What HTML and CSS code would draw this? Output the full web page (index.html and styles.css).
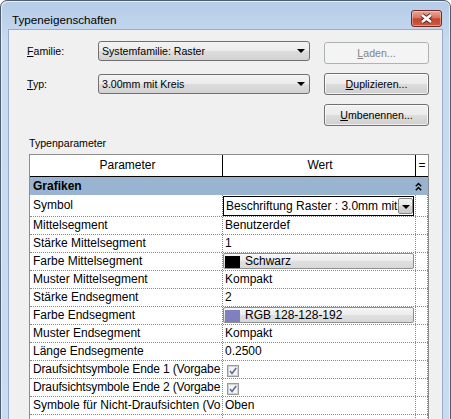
FILE: index.html
```html
<!DOCTYPE html>
<html>
  <head>
    <meta charset="utf-8" />
    <title>Typeneigenschaften</title>
    <link rel="stylesheet" href="styles.css">
  </head>
  <body>
    <div class="window">
      <div class="titlebar">
        <span class="title">Typeneigenschaften</span>
        <button class="close">
          <svg width="15" height="11" viewBox="0 0 15 11">
            <path d="M3 2 L12 9 M12 2 L3 9" stroke="#5b2a24" stroke-width="4.6" fill="none" />
            <path d="M3 2 L12 9 M12 2 L3 9" stroke="#fff" stroke-width="2.6" fill="none" />
          </svg>
        </button>
      </div>
      <div class="client">
        <div class="form-row r1">
          <span class="lbl"><u>F</u>amilie:</span>
          <div class="combo">Systemfamilie: Raster<span class="arrow"></span></div>
          <button class="btn disabled"><u>L</u>aden...</button>
        </div>
        <div class="form-row r2">
          <span class="lbl"><u>T</u>yp:</span>
          <div class="combo">3.00mm mit Kreis<span class="arrow"></span></div>
          <button class="btn"><u>D</u>uplizieren...</button>
        </div>
        <div class="form-row r3">
          <button class="btn"><u>U</u>mbenennen...</button>
        </div>
        <div class="section-label">Typenparameter</div>
        <div class="props">
          <div class="prow head">
            <div class="c1">Parameter</div>
            <div class="c2">Wert</div>
            <div class="c3">=</div>
          </div>
          <div class="group">
            <span>Grafiken</span>
            <svg width="7" height="9" viewBox="0 0 7 9">
              <path d="M0.8 4.2 L3.5 1.5 L6.2 4.2 M0.8 8.2 L3.5 5.5 L6.2 8.2" stroke="#000" stroke-width="1.5" fill="none" />
            </svg>
          </div>
          <div class="prow tall">
            <div class="c1">Symbol</div>
            <div class="c2 edit">
              <div class="edit-combo">
                <span class="edit-text">Beschriftung Raster : 3.0mm mit</span>
                <span class="dd"><span class="dd-arrow"></span></span>
              </div>
            </div>
            <div class="c3"></div>
          </div>
          <div class="prow">
            <div class="c1">Mittelsegment</div>
            <div class="c2">Benutzerdef</div>
            <div class="c3"></div>
          </div>
          <div class="prow">
            <div class="c1">Stärke Mittelsegment</div>
            <div class="c2">1</div>
            <div class="c3"></div>
          </div>
          <div class="prow">
            <div class="c1">Farbe Mittelsegment</div>
            <div class="c2 edit">
              <div class="color-btn"><span class="swatch black"></span>Schwarz</div>
            </div>
            <div class="c3"></div>
          </div>
          <div class="prow">
            <div class="c1">Muster Mittelsegment</div>
            <div class="c2">Kompakt</div>
            <div class="c3"></div>
          </div>
          <div class="prow">
            <div class="c1">Stärke Endsegment</div>
            <div class="c2">2</div>
            <div class="c3"></div>
          </div>
          <div class="prow">
            <div class="c1">Farbe Endsegment</div>
            <div class="c2 edit">
              <div class="color-btn"><span class="swatch blue"></span>RGB 128-128-192</div>
            </div>
            <div class="c3"></div>
          </div>
          <div class="prow">
            <div class="c1">Muster Endsegment</div>
            <div class="c2">Kompakt</div>
            <div class="c3"></div>
          </div>
          <div class="prow">
            <div class="c1">Länge Endsegmente</div>
            <div class="c2">0.2500</div>
            <div class="c3"></div>
          </div>
          <div class="prow">
            <div class="c1 tight">Draufsichtsymbole Ende 1 (Vorgabe</div>
            <div class="c2">
              <svg class="check" width="12" height="12" viewBox="0 0 12 12">
                <rect x="0.5" y="0.5" width="11" height="11" fill="#e6e6e6" stroke="#9a9a9a" />
                <rect x="1.5" y="1.5" width="9" height="9" fill="#f4f4f4" stroke="#d2d2d2" />
                <path d="M3 6 L5 8.4 L9.2 3" stroke="#5a6f9c" stroke-width="1.6" fill="none" />
              </svg>
            </div>
            <div class="c3"></div>
          </div>
          <div class="prow">
            <div class="c1 tight">Draufsichtsymbole Ende 2 (Vorgabe</div>
            <div class="c2">
              <svg class="check" width="12" height="12" viewBox="0 0 12 12">
                <rect x="0.5" y="0.5" width="11" height="11" fill="#e6e6e6" stroke="#9a9a9a" />
                <rect x="1.5" y="1.5" width="9" height="9" fill="#f4f4f4" stroke="#d2d2d2" />
                <path d="M3 6 L5 8.4 L9.2 3" stroke="#5a6f9c" stroke-width="1.6" fill="none" />
              </svg>
            </div>
            <div class="c3"></div>
          </div>
          <div class="prow">
            <div class="c1">Symbole für Nicht-Draufsichten (Vo</div>
            <div class="c2">Oben</div>
            <div class="c3"></div>
          </div>
          <div class="prow">
            <div class="c1"></div>
            <div class="c2"></div>
            <div class="c3"></div>
          </div>
        </div>
      </div>
    </div>
  </body>
</html>
```

FILE: styles.css
```css
html,
body {
  margin: 0;
  height: 419px;
  overflow: hidden;
  background: #fff;
}

body {
  font-family: "Liberation Sans", Arial, sans-serif;
  color: #000;
}

.window {
  width: 449px;
  height: 470px;
  border: 1px solid #4e5d70;
  border-radius: 7px 7px 0 0;
  background: linear-gradient(#b5cce7, #c7daf0 40px, #c9dcf1);
  box-shadow: inset 1px 1px 0 #e4eef9, inset -1px 0 0 #e4eef9;
  display: flex;
  flex-direction: column;
}

.titlebar {
  height: 28px;
  display: flex;
  align-items: flex-start;
  padding: 0 8px 0 11px;
}

.title {
  margin-top: 11px;
  font-size: 11.7px;
  line-height: 16px;
}

.close {
  margin-left: auto;
  margin-top: 9px;
  width: 31px;
  height: 17px;
  padding: 0;
  border: 1px solid #6f2b22;
  border-radius: 3px;
  background: linear-gradient(#e9a899, #d77562 45%, #c4442f 52%, #cf5a41);
  box-shadow: inset 0 0 0 1px rgba(255, 220, 210, 0.45);
  display: flex;
  align-items: center;
  justify-content: center;
}

.client {
  margin: 0 7px;
  flex: 1;
  background: #f0f0f0;
  border: 1px solid #98acc5;
  border-bottom: none;
}

.form-row {
  display: flex;
  align-items: flex-start;
  padding-left: 18px;
  font-size: 10.6px;
}

.form-row.r1 {
  margin-top: 11px;
}

.form-row.r2 {
  margin-top: 9px;
}

.form-row.r3 {
  margin-top: 9px;
  padding-left: 315px;
}

.lbl {
  width: 71px;
  line-height: 20px;
}

.r2 .lbl {
  margin-top: 1px;
}

.combo {
  width: 212px;
  height: 20px;
  box-sizing: border-box;
  margin-right: 14px;
  padding-left: 3px;
  border: 1px solid #707070;
  border-radius: 3px;
  background: linear-gradient(#f3f3f3, #ebebeb 50%, #dddddd 51%, #d2d2d2);
  display: flex;
  align-items: center;
}

.r2 .combo {
  margin-top: 1px;
}

.arrow {
  margin-left: auto;
  margin-right: 4px;
  width: 0;
  height: 0;
  border-left: 4px solid transparent;
  border-right: 4px solid transparent;
  border-top: 4px solid #000;
}

.btn {
  width: 105px;
  height: 22px;
  padding: 0;
  border: 1px solid #707070;
  border-radius: 3px;
  background: linear-gradient(#f2f2f2, #ebebeb 50%, #dddddd 51%, #cfcfcf);
  box-shadow: inset 0 0 0 1px rgba(255, 255, 255, 0.7);
  font-family: inherit;
  font-size: 10.6px;
  color: #000;
}

.btn.disabled {
  margin-top: 1px;
  border-color: #adb2b5;
  background: #f4f4f4;
  box-shadow: none;
  color: #838383;
}

.section-label {
  margin: 10px 0 0 20px;
  font-size: 10.6px;
  line-height: 14px;
}

.props {
  margin: 4px 0 0 20px;
  width: 398px;
  border: 1px solid #8c8c8c;
  border-bottom: none;
  background: #fff;
  font-size: 12px;
}

.prow {
  display: flex;
  height: 17px;
  line-height: 17px;
  border-bottom: 1px dotted #8a8a8a;
}

.c1,
.c2,
.c3 {
  box-sizing: border-box;
  overflow: hidden;
  white-space: nowrap;
  border-right: 1px dotted #8a8a8a;
}

.c1 {
  width: 193px;
  padding-left: 3px;
}

.c1.tight {
  letter-spacing: -0.15px;
}

.c2 {
  width: 193px;
  padding-left: 2px;
}

.c3 {
  width: 12px;
}

.c2.edit {
  padding-left: 0;
}

.prow.head {
  height: 21px;
  line-height: 21px;
  border-bottom: 1px solid #000;
}

.head .c1,
.head .c2 {
  text-align: center;
  border-right: 1px solid #000;
}

.head .c3 {
  text-align: center;
  border-right: none;
}

.group {
  height: 18px;
  line-height: 18px;
  padding: 0 6px 0 3px;
  background: #99b4d1;
  font-weight: bold;
  display: flex;
  align-items: center;
  justify-content: space-between;
}

.prow.tall {
  height: 21px;
  line-height: 21px;
}

.edit-combo {
  width: 191px;
  height: 20px;
  margin-top: 1px;
  box-sizing: border-box;
  border: 1px solid #000;
  padding-left: 2px;
  display: flex;
  line-height: 18px;
}

.edit-text {
  flex: 1;
  overflow: hidden;
}

.dd {
  width: 15px;
  height: 16px;
  margin-top: 1px;
  box-sizing: border-box;
  border: 1px solid #8a8a8a;
  border-radius: 2px;
  background: linear-gradient(#f4f4f4, #e6e6e6 50%, #d6d6d6 51%, #cacaca);
  display: flex;
  align-items: center;
  justify-content: center;
}

.dd-arrow {
  margin-top: 2px;
  width: 0;
  height: 0;
  border-left: 4px solid transparent;
  border-right: 4px solid transparent;
  border-top: 4px solid #000;
}

.color-btn {
  width: 191px;
  height: 16px;
  box-sizing: border-box;
  border: 1px solid #8e8f8f;
  border-radius: 2px;
  background: linear-gradient(#f6f6f6, #ececec 50%, #e0e0e0 51%, #d8d8d8);
  display: flex;
  align-items: center;
  padding-left: 1px;
  line-height: 14px;
}

.swatch {
  width: 15px;
  height: 12px;
  margin: 2px 5px 0 0;
}

.swatch.black {
  background: #000;
}

.swatch.blue {
  background: #8080c0;
}

.check {
  display: block;
  margin: 4px 0 0 2px;
}
```
